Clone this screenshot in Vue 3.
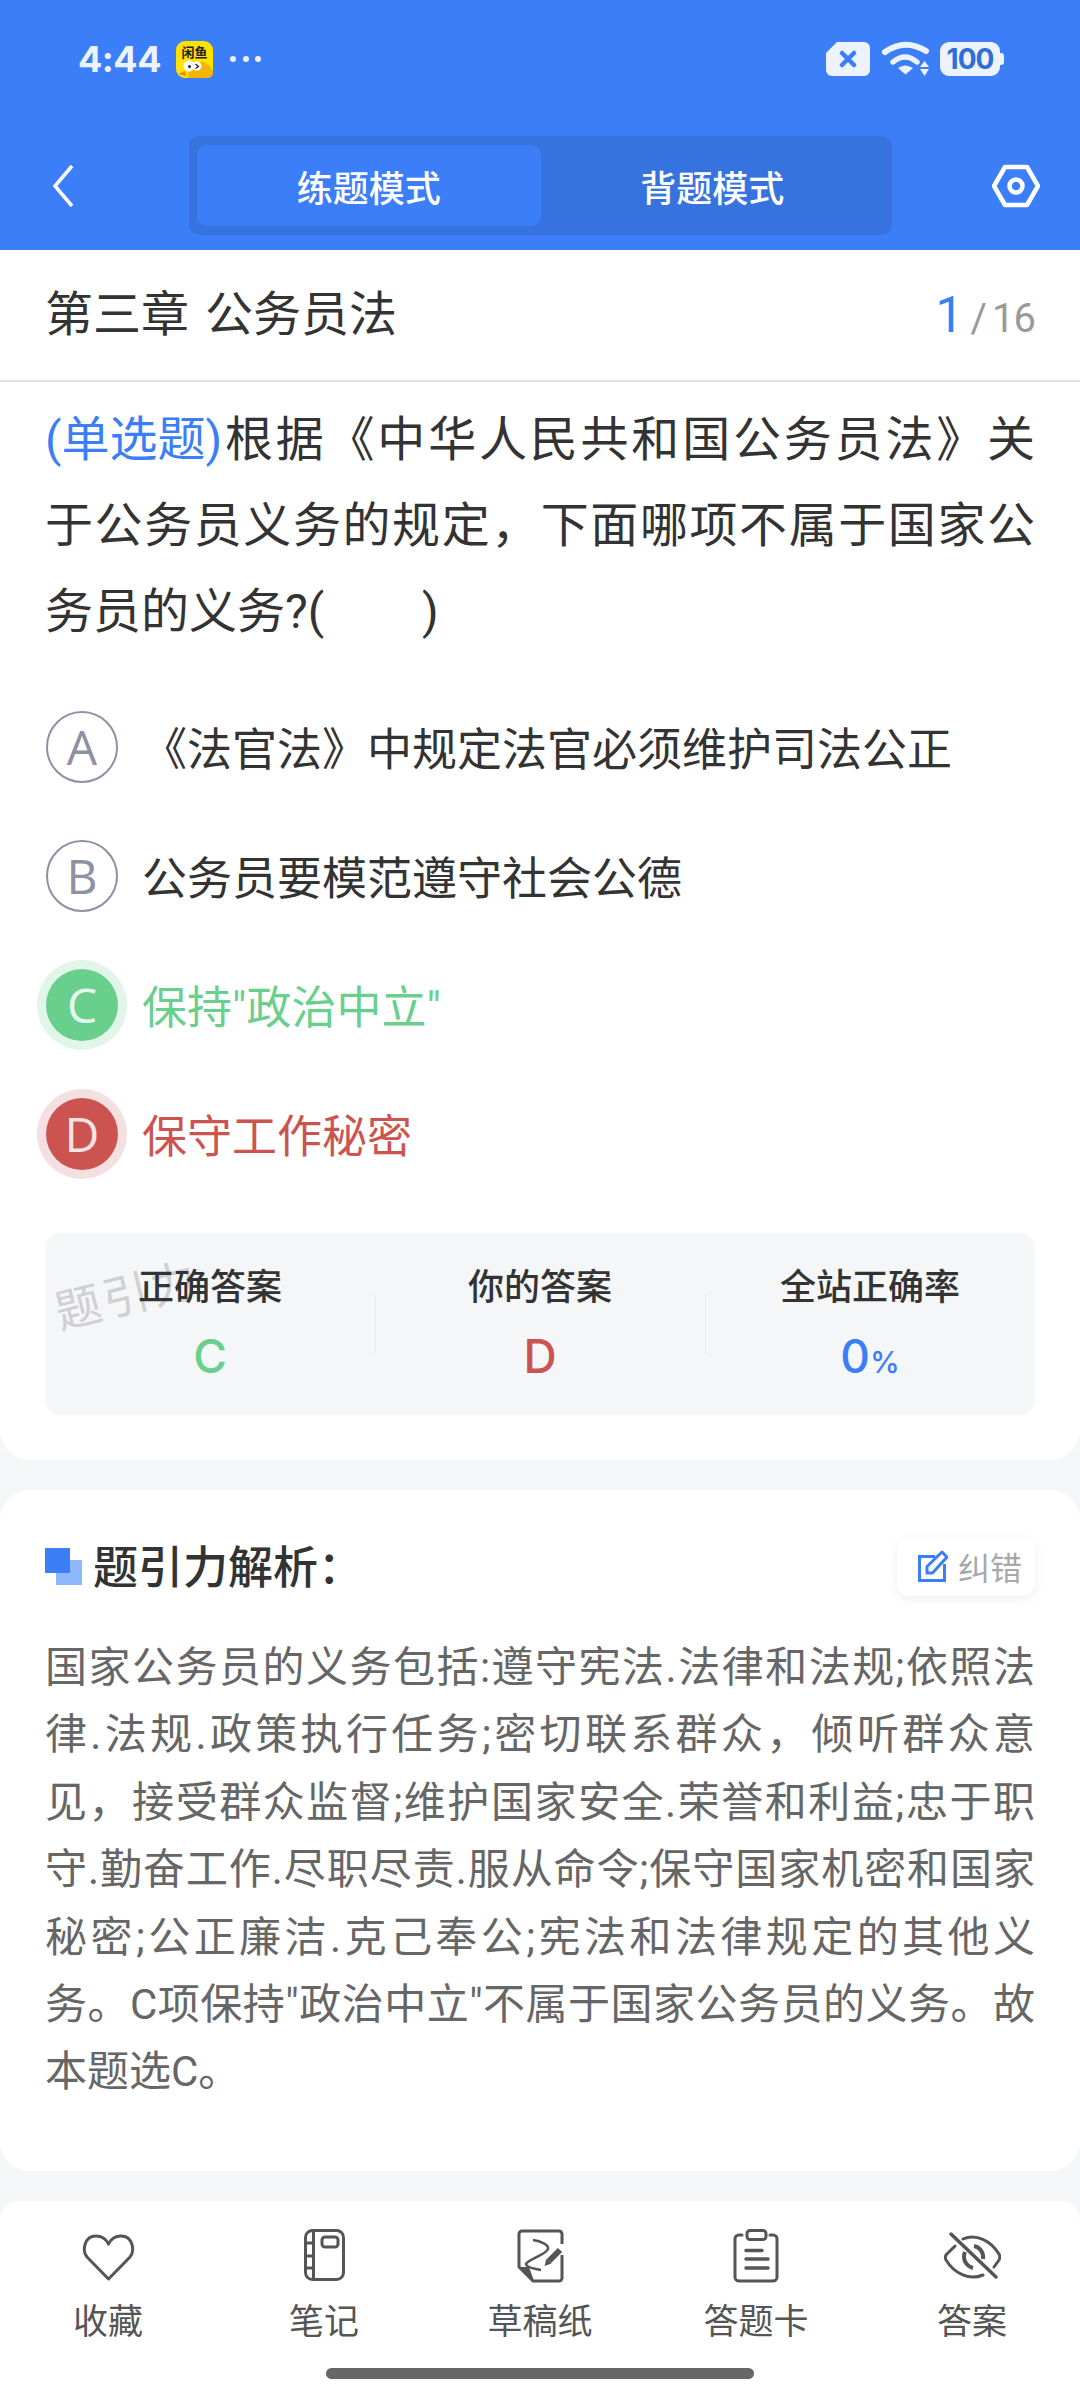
<template>
  <div class="page">
    <header class="top">
      <div class="status">
        <div class="status-left">
          <span class="time">4:44</span>
          <svg class="app-icon" width="37" height="37" viewBox="0 0 37 37">
            <rect width="37" height="37" rx="9" fill="#ffe100" />
            <text class="app-name" x="18.500" y="16" text-anchor="middle">闲鱼</text>
            <path d="M12 37c0-10 6-17 14-16 6 1 10 6 11 10v1a5 5 0 0 1-5 5z" fill="#f5b400" />
            <circle cx="13" cy="25" r="5.500" fill="#fff" />
            <circle cx="21" cy="25" r="4.500" fill="#fff" />
            <circle cx="13.500" cy="25.500" r="1.500" fill="#222" />
            <path d="M19.500 23l3 2.500-3 2" fill="none" stroke="#222" stroke-width="1.200" />
            <path d="M2 33l7-3 1 5z" fill="#ef8a00" />
          </svg>
          <span class="dots"><i></i><i></i><i></i></span>
        </div>
        <div class="status-right">
          <svg width="44" height="34" viewBox="0 0 44 34">
            <path d="M11 0h27a6 6 0 0 1 6 6v22a6 6 0 0 1-6 6H6a6 6 0 0 1-6-6V11z" fill="#edf3fe" />
            <path d="M16 11l12 12M28 11L16 23" stroke="#3b7ef8" stroke-width="4.500" stroke-linecap="round" />
          </svg>
          <svg width="48" height="36" viewBox="0 0 48 36">
            <path d="M4 11Q24-3 45 10" fill="none" stroke="#edf3fe" stroke-width="6" stroke-linecap="round" />
            <path d="M12 21Q24 11 36 21" fill="none" stroke="#edf3fe" stroke-width="5.500" stroke-linecap="round" />
            <path d="M17 27Q24 22 32 27L24.500 33.500z" fill="#edf3fe" />
            <path d="M39 26l4.500-6 4.500 6zM39 28h9l-4.500 7z" fill="#edf3fe" />
          </svg>
          <span class="battery"><b>100</b></span>
        </div>
      </div>
      <nav class="nav">
        <svg class="back" width="26" height="44" viewBox="0 0 26 44">
          <path d="M22 2L5 22l17 20" fill="none" stroke="#fff" stroke-width="3.500" />
        </svg>
        <div class="tabs">
          <span v-for="(t, i) in tabs" :key="t" class="tab" :class="{ on: i === 0 }">{{ t }}</span>
        </div>
        <svg class="gear" width="48" height="44" viewBox="0 0 48 44">
          <path d="M13 3h22l11 19-11 19H13L2 22z" fill="none" stroke="#fff" stroke-width="4.500" stroke-linejoin="round" />
          <circle cx="24" cy="22" r="6.500" fill="none" stroke="#fff" stroke-width="4.500" />
        </svg>
      </nav>
    </header>

    <section class="card question">
      <div class="chapter">
        <span class="chapter-name">第三章 公务员法</span>
        <span class="progress"><em>1</em><i>/</i>16</span>
      </div>
      <div class="stem">
        <p class="stem-first"><span class="kind">(单选题)</span>根据《中华人民共和国公务员法》关</p>
        <p>于公务员义务的规定，下面哪项不属于国家公务员的义务?(&emsp;&emsp;)</p>
      </div>
      <ul class="options">
        <li v-for="o in options" :key="o.key" class="option" :class="o.state">
          <span class="badge">{{ o.key }}</span>
          <span class="option-text">{{ o.text }}</span>
        </li>
      </ul>
      <div class="summary">
        <span class="watermark">题引力</span>
        <div v-for="s in summary" :key="s.label" class="cell">
          <span class="cell-label">{{ s.label }}</span>
          <span class="cell-value" :class="s.tone">{{ s.value }}<small v-if="s.unit">{{ s.unit }}</small></span>
        </div>
      </div>
    </section>

    <section class="card analysis">
      <div class="analysis-head">
        <span class="mark"><i></i><i></i></span>
        <h2>题引力解析：</h2>
        <span class="fix">
          <svg width="30" height="32" viewBox="0 0 30 32">
            <path d="M17 6.500H1.500v24h25V14" fill="none" stroke="#3b7ef8" stroke-width="3" />
            <path d="M9 23v-6.500L24 2l5 5-14.500 16z" fill="none" stroke="#3b7ef8" stroke-width="3" stroke-linejoin="round" />
          </svg>
          <span>纠错</span>
        </span>
      </div>
      <p class="analysis-text">国家公务员的义务包括:遵守宪法.法律和法规;依照法律.法规.政策执行任务;密切联系群众，倾听群众意见，接受群众监督;维护国家安全.荣誉和利益;忠于职守.勤奋工作.尽职尽责.服从命令;保守国家机密和国家秘密;公正廉洁.克己奉公;宪法和法律规定的其他义务。C项保持"政治中立"不属于国家公务员的义务。故本题选C。</p>
    </section>

    <footer class="tools">
      <div class="tool-row">
        <div class="tool">
          <svg width="54" height="54" viewBox="0 0 54 54">
            <path d="M27.500 50L6 28C1 22 3 7 15 7c6 0 10 3 12.500 8C30 10 34 7 40 7c12 0 14 15 9 21z" fill="none" stroke="#555" stroke-width="3" stroke-linejoin="round" />
          </svg>
          <span>收藏</span>
        </div>
        <div class="tool">
          <svg width="54" height="54" viewBox="0 0 54 54">
            <rect x="8.500" y="1.500" width="38" height="49" rx="7" fill="none" stroke="#555" stroke-width="3" />
            <path d="M16.500 2v48M8 14h8M8 27h8M8 39h8" fill="none" stroke="#555" stroke-width="3" />
            <rect x="25" y="8" width="16" height="10" rx="3" fill="none" stroke="#555" stroke-width="3" />
          </svg>
          <span>笔记</span>
        </div>
        <div class="tool">
          <svg width="54" height="54" viewBox="0 0 54 54">
            <path d="M49 15V5a3 3 0 0 0-3-3H9a3 3 0 0 0-3 3v33l14 14h26a3 3 0 0 0 3-3V26" fill="none" stroke="#555" stroke-width="3" />
            <path d="M7 38h9l5 14z" fill="#555" />
            <path d="M20 11c8 1 16 5 15 9-1 5-21 11-22 15 0 3 9 5 15 6" fill="none" stroke="#555" stroke-width="2.500" />
            <path d="M47 21L36 32" stroke="#555" stroke-width="6" />
            <path d="M33.500 29.500l5 5-7 2.500z" fill="#555" />
          </svg>
          <span>草稿纸</span>
        </div>
        <div class="tool">
          <svg width="54" height="54" viewBox="0 0 54 54">
            <path d="M13 6h-3a4 4 0 0 0-4 4v38a4 4 0 0 0 4 4h34a4 4 0 0 0 4-4V10a4 4 0 0 0-4-4h-3" fill="none" stroke="#555" stroke-width="3" stroke-linecap="round" />
            <rect x="18" y="1.500" width="19" height="9" rx="3" fill="none" stroke="#555" stroke-width="3" />
            <path d="M17 21.500h16M17 30h22M17 39h22" stroke="#555" stroke-width="3.500" stroke-linecap="round" />
          </svg>
          <span>答题卡</span>
        </div>
        <div class="tool">
          <svg width="58" height="54" viewBox="0 0 58 54">
            <path d="M8 5l45 43" stroke="#555" stroke-width="3.500" stroke-linecap="round" />
            <path d="M20 10c13-6 28 2 36 15 1 2 1 4 0 6l-5 7M12 17L3 26c-1 2-1 3 0 5 8 13 23 21 37 15" fill="none" stroke="#555" stroke-width="3" stroke-linecap="round" />
            <path d="M31 17c6 1 10 7 9 13M22 23c-3 7 1 14 8 16" fill="none" stroke="#555" stroke-width="4" />
          </svg>
          <span>答案</span>
        </div>
      </div>
      <div class="home-bar"></div>
    </footer>
  </div>
</template>

<script setup>
const tabs = ['练题模式', '背题模式']

const options = [
  { key: 'A', text: '《法官法》中规定法官必须维护司法公正', state: '' },
  { key: 'B', text: '公务员要模范遵守社会公德', state: '' },
  { key: 'C', text: '保持"政治中立"', state: 'right' },
  { key: 'D', text: '保守工作秘密', state: 'wrong' }
]

const summary = [
  { label: '正确答案', value: 'C', tone: 'green' },
  { label: '你的答案', value: 'D', tone: 'red' },
  { label: '全站正确率', value: '0', unit: '%', tone: 'blue' }
]
</script>

<style>
html, body { background: #f4f6f8; }
</style>

<style scoped>
.page {
  width: 1080px;
  height: 2400px;
  overflow: hidden;
  display: flex;
  flex-direction: column;
  background: #f4f6f8;
  font-family: Roboto, "Noto Sans CJK SC", sans-serif;
  color: #333;
}
.top { height: 250px; flex: none; background: #3b7ef8; display: flex; flex-direction: column; }
.status {
  height: 118px;
  padding: 0 80px 0 78px;
  display: flex;
  align-items: center;
  justify-content: space-between;
}
.status-left, .status-right { display: flex; align-items: center; }
.time { font: 700 36px Inter, sans-serif; letter-spacing: -0.5px; color: #edf3fe; }
.app-icon { margin-left: 15px; }
.app-name { font: 700 13px "Noto Sans CJK SC", sans-serif; fill: #222; }
.dots { display: flex; gap: 6.5px; margin-left: 17px; }
.dots i { width: 6px; height: 6px; border-radius: 50%; background: #edf3fe; }
.status-right { gap: 11px; }
.battery {
  position: relative;
  width: 60px;
  height: 34px;
  border-radius: 9px;
  background: #edf3fe;
  display: flex;
  align-items: center;
  justify-content: center;
}
.battery::after {
  content: "";
  position: absolute;
  right: -4px;
  top: 11px;
  width: 4px;
  height: 12px;
  border-radius: 0 3px 3px 0;
  background: #edf3fe;
}
.battery b { font: 700 28px Inter, sans-serif; letter-spacing: -1px; color: #2f6ed8; }
.nav { display: flex; align-items: center; padding: 3px 20px 0 50px; height: 129px; }
.back { flex: none; }
.tabs {
  width: 703px;
  height: 99px;
  margin-left: 113px;
  padding: 9px 8px;
  box-sizing: border-box;
  display: flex;
  border-radius: 10px;
  background: #3673de;
}
.tab {
  flex: 1;
  display: flex;
  align-items: center;
  justify-content: center;
  font-size: 36px;
  font-weight: 500;
  color: #fff;
  border-radius: 10px;
}
.tab.on { background: #3b7ef8; }
.gear { margin-left: 100px; flex: none; }

.card { background: #fff; flex: none; }
.question { height: 1210px; border-radius: 0 0 30px 30px; }
.chapter {
  height: 132px;
  box-sizing: border-box;
  padding: 0 45px;
  display: flex;
  align-items: center;
  justify-content: space-between;
  border-bottom: 2px solid #e2e2e4;
}
.chapter-name { font-size: 48px; line-height: 1; word-spacing: 4px; color: #333; }
.progress { font: 400 40px Roboto, sans-serif; letter-spacing: -1px; color: #999; display: flex; align-items: baseline; }
.progress em { font-style: normal; font-size: 50px; color: #3b7ef8; margin-right: 8px; }
.progress i { font-style: normal; margin-right: 6px; }
.stem { padding: 15px 45px 0; font-size: 48px; line-height: 86px; color: #333; }
.stem p { margin: 0; text-align: justify; }
.stem .stem-first { text-align-last: justify; }
.kind { display: inline-block; color: #3b7ef8; }
.options { list-style: none; margin: 27px 0 0; padding: 0 0 0 46px; }
.option { height: 129px; display: flex; align-items: center; font-size: 45px; color: #333; }
.badge {
  width: 72px;
  height: 72px;
  box-sizing: border-box;
  flex: none;
  border-radius: 50%;
  border: 2px solid #8e90a3;
  color: #8e90a3;
  font: 400 48px "Open Sans", sans-serif;
  display: flex;
  align-items: center;
  justify-content: center;
}
.option-text { margin-left: 24px; }
.right { color: #69cf8d; }
.right .badge { background: #69cf8d; border: 0; color: #e4f8eb; box-shadow: 0 0 0 9px #e1f6e9; }
.wrong { color: #cb5450; }
.wrong .badge { background: #cb5450; border: 0; color: #f8e4e4; box-shadow: 0 0 0 9px #f5e0e1; }

.summary {
  position: relative;
  margin: 35px 45px 0;
  height: 182px;
  border-radius: 16px;
  background: #f4f6f8;
  display: grid;
  grid-template-columns: repeat(3, 1fr);
}
.cell { display: flex; flex-direction: column; align-items: center; padding-top: 32px; position: relative; }
.cell + .cell::before {
  content: "";
  position: absolute;
  left: 0;
  top: 61px;
  height: 60px;
  border-left: 1px solid #e9ebee;
}
.cell-label { font-size: 36px; line-height: 46px; font-weight: 500; color: #333; }
.cell-value { font: 500 46px/56px Inter, sans-serif; margin-top: 17px; }
.cell-value small { font-size: 30px; }
.green { color: #69cf8d; }
.red { color: #cb5450; }
.blue { color: #3b7ef8; }
.watermark {
  position: absolute;
  left: 8px;
  top: 26px;
  font-size: 46px;
  letter-spacing: 3px;
  color: #d0d0d2;
  transform: rotate(-14deg);
}

.analysis { margin-top: 30px; height: 681px; border-radius: 30px; padding: 46px 45px 0; box-sizing: border-box; }
.analysis-head { height: 60px; display: flex; align-items: center; }
.mark { position: relative; width: 37px; height: 37px; flex: none; }
.mark i { position: absolute; display: block; }
.mark i:first-child { left: 11px; top: 12px; width: 26px; height: 25px; background: #8db8fb; }
.mark i:last-child { left: 0; top: 0; width: 25px; height: 25px; background: #3b7ef8; }
.analysis-head h2 { margin: -4px 0 0 11px; font-size: 45px; font-weight: 500; color: #333; }
.fix {
  margin-left: auto;
  width: 138px;
  height: 59px;
  box-sizing: border-box;
  padding-left: 21px;
  border-radius: 12px;
  background: #fff;
  box-shadow: 0 3px 12px rgba(0, 0, 0, 0.07);
  display: flex;
  align-items: center;
  gap: 10px;
  font-size: 32px;
  color: #a8a8a8;
}
.analysis-text {
  margin: 38px 0 0;
  font-size: 42px;
  line-height: 67.4px;
  color: #666;
  text-align: justify;
}

.tools {
  margin-top: 30px;
  flex: 1;
  border-radius: 20px 20px 0 0;
  background: #fff;
  display: flex;
  flex-direction: column;
}
.tool-row { display: grid; grid-template-columns: repeat(5, 216px); }
.tool { display: flex; flex-direction: column; align-items: center; padding-top: 28px; }
.tool svg { height: 54px; }
.tool span { margin-top: 17px; font-size: 35px; line-height: 46px; color: #555; }
.home-bar {
  margin: 22px auto 0;
  width: 428px;
  height: 11px;
  border-radius: 6px;
  background: #666;
}
</style>
